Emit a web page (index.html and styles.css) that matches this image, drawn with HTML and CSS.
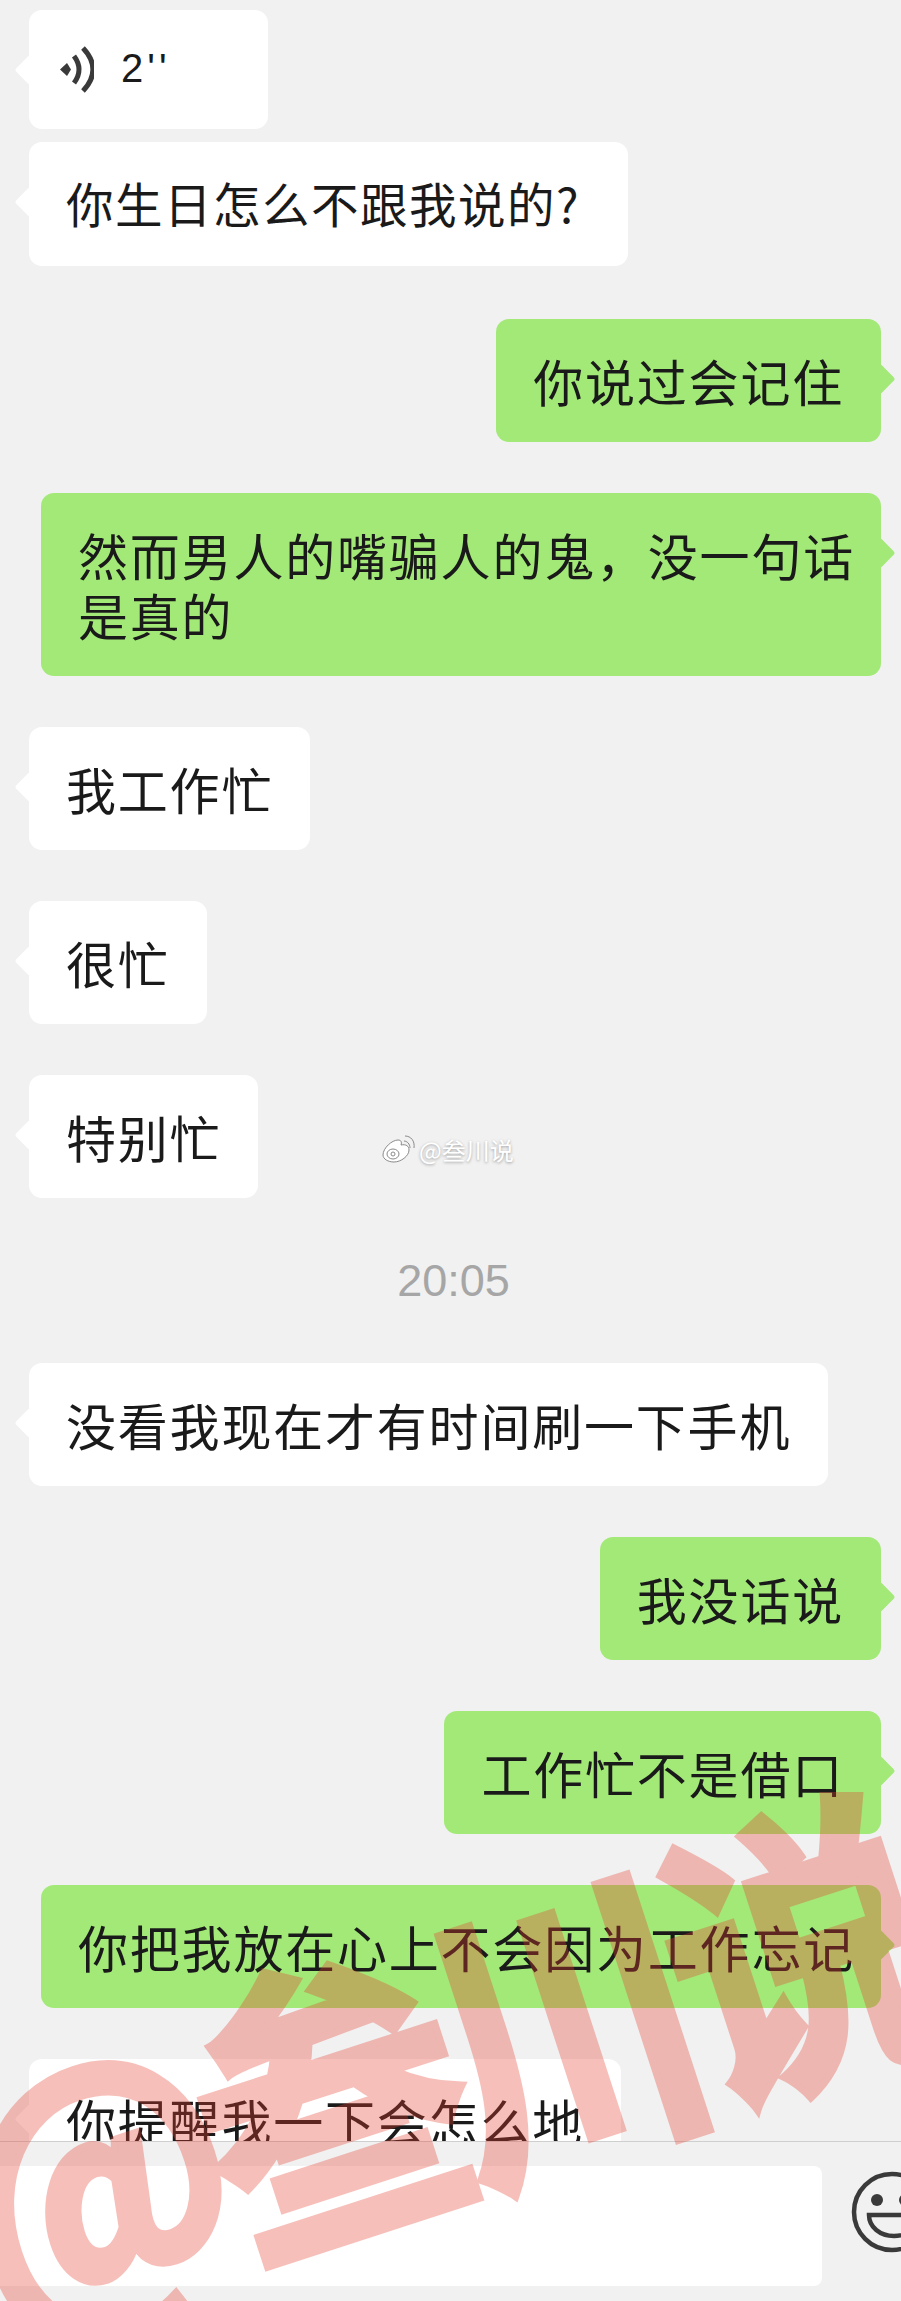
FILE: index.html
```html
<!DOCTYPE html>
<html lang="zh-CN">
<head>
<meta charset="utf-8">
<title>聊天记录</title>
<link rel="stylesheet" href="styles.css">
</head>
<body>
<div class="screen">
  <main class="chat">
    <div class="group">
      <div class="bubble in voice">
        <svg class="voice-icon" width="34" height="50" viewBox="0 0 34 50" aria-hidden="true">
          <path class="voice-dot" d="M0 24.500 7 18 11 24.500 7 31z"/>
          <path class="voice-arc" d="M14 11Q24 24.500 14 38"/>
          <path class="voice-arc" d="M23 3Q43 24.500 23 46"/>
        </svg>
        <span class="voice-len">2''</span>
      </div>
      <div class="bubble in first">你生日怎么不跟我说的?</div>
    </div>
    <div class="bubble out">你说过会记住</div>
    <div class="bubble out full">然而男人的嘴骗人的鬼，没一句话是真的</div>
    <div class="bubble in">我工作忙</div>
    <div class="bubble in">很忙</div>
    <div class="bubble in">特别忙</div>
    <div class="time">20:05</div>
    <div class="bubble in">没看我现在才有时间刷一下手机</div>
    <div class="bubble out">我没话说</div>
    <div class="bubble out">工作忙不是借口</div>
    <div class="bubble out full">你把我放在心上不会因为工作忘记</div>
    <div class="bubble in">你提醒我一下会怎么地</div>
  </main>
  <footer class="bar">
    <div class="input"></div>
    <svg class="emoji" width="50" height="84" viewBox="0 0 50 84" aria-hidden="true">
      <circle class="emoji-line" cx="41" cy="42" r="38"/>
      <circle class="emoji-eye" cx="26" cy="30" r="6"/>
      <circle class="emoji-eye" cx="54" cy="30" r="6"/>
      <path class="emoji-line" d="M18 45h50c0 12-11 21-25 21S18 57 18 45z"/>
    </svg>
  </footer>
  <div class="weibo-mark">
    <svg width="36" height="30" viewBox="0 0 36 30" aria-hidden="true">
      <path class="weibo-body" d="M3 20c0-7 9-15 15-15 3 0 4 2 3 5 5-1 8 1 8 5 0 6-8 12-15 12-6 0-11-3-11-7z"/>
      <ellipse class="weibo-ring" cx="13" cy="19" rx="6" ry="5"/>
      <circle class="weibo-ring" cx="13" cy="19" r="2"/>
      <path class="weibo-ring" d="M24 6c3 0 6 3 6 7M25 1c6 0 10 5 9 12"/>
    </svg>
    <span>@叁川说</span>
  </div>
  <div class="watermark">@叁川说</div>
</div>
</body>
</html>
```
FILE: styles.css
```css
* { box-sizing: border-box; }
html, body { margin: 0; padding: 0; }
body { background: #f1f1f1; font-family: "Noto Sans CJK SC", "Liberation Sans", sans-serif; color: #1a1a1a; }
.screen { position: relative; width: 901px; height: 2301px; overflow: hidden; background: #f1f1f1; }

.chat { height: 2141px; overflow: hidden; padding-top: 10px; display: flex; flex-direction: column; gap: 51px; }
.group { display: flex; flex-direction: column; align-items: flex-start; gap: 13px; margin-bottom: 2px; }

.bubble { position: relative; flex: none; width: fit-content; min-height: 123px; padding: 31px 37px 32px; border-radius: 13px; font-size: 50px; letter-spacing: 1.8px; line-height: 60px; white-space: nowrap; }
.bubble::after { content: ""; position: absolute; top: 49px; width: 22px; height: 22px; border-radius: 3px; transform: rotate(45deg); }
.in { margin-left: 29px; background: #fff; }
.in::after { left: -10px; background: #fff; }
.out { margin-left: auto; margin-right: 20px; background: #a3e977; }
.out::after { right: -10px; background: #a3e977; }
.full { width: 840px; padding-right: 20px; white-space: normal; }

.voice { display: flex; align-items: center; width: 239px; min-height: 119px; padding: 0 0 0 31px; }
.voice-icon { display: block; margin-right: 27px; }
.voice-dot { fill: #3a3a3a; }
.voice-arc { fill: none; stroke: #3a3a3a; stroke-width: 5px; }
.voice-len { font-family: "Liberation Sans", sans-serif; font-size: 40px; letter-spacing: 4px; line-height: 1; margin-bottom: 4px; }
.first { font-size: 47.5px; letter-spacing: 1.5px; min-height: 124px; padding-right: 48px; }

.time { flex: none; height: 63px; padding-left: 6px; display: flex; justify-content: center; align-items: center; font-family: "Liberation Sans", sans-serif; font-size: 45px; color: #a6a6a6; }

.bar { height: 160px; border-top: 1px solid #cfcfcf; padding-top: 24px; display: flex; align-items: flex-start; background: #f1f1f1; }
.input { width: 822px; height: 120px; background: #fff; border-radius: 0 8px 8px 0; }
.emoji { display: block; margin-left: 29px; margin-top: 4px; overflow: hidden; }
.emoji-line { fill: none; stroke: #3a3a3a; stroke-width: 4.5px; }
.emoji-eye { fill: #3a3a3a; }

.weibo-mark { position: absolute; left: 380px; top: 1135px; display: flex; align-items: center; gap: 3px; color: #fff; font-size: 24px; line-height: 30px; text-shadow: 0 1px 3px rgba(0,0,0,.35); }
.weibo-body { fill: #fff; stroke: #8a8a8a; stroke-width: 1px; }
.weibo-ring { fill: none; stroke: #8a8a8a; stroke-width: 1px; }

.watermark { position: absolute; left: -40px; top: 2058px; white-space: nowrap; font-size: 270px; line-height: 300px; font-weight: 700; letter-spacing: -22px; color: #e74031; -webkit-text-stroke: 7px #e74031; opacity: .33; transform: rotate(-18deg) scaleY(1.12); transform-origin: 0 50%; pointer-events: none; }
```
